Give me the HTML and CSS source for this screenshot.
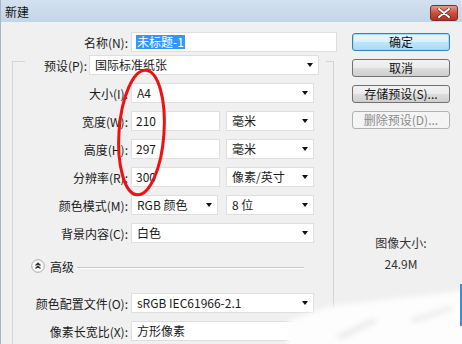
FILE: index.html
```html
<!DOCTYPE html>
<html lang="zh-CN">
<head>
<meta charset="UTF-8" />
<title>新建</title>
<link rel="stylesheet" href="styles.css">
</head>
<body>

<div class="window">
  <div class="titlebar">
    <span class="title">新建</span>
    <span class="close">
      <svg width="14" height="10" viewBox="0 0 14 10">
        <path d="M2 1 L12 9 M12 1 L2 9" stroke="#5a1a1a" stroke-width="3.2" stroke-linecap="round"/>
        <path d="M2 1 L12 9 M12 1 L2 9" stroke="#fff" stroke-width="2" stroke-linecap="round"/>
      </svg>
    </span>
  </div>

  <div class="body">
    <div class="form">
      <div class="row name-row">
        <label>名称(N):</label>
        <div class="field w-name"><span class="picked">未标题-1</span></div>
      </div>

      <div class="group">
        <div class="row preset">
          <label>预设(P):</label>
          <div class="field select w-preset"><span>国际标准纸张</span><i class="arrow"></i></div>
        </div>
        <div class="row">
          <label>大小(I):</label>
          <div class="field select w-full"><span>A4</span><i class="arrow"></i></div>
        </div>
        <div class="row">
          <label>宽度(W):</label>
          <div class="field w-num">210</div>
          <div class="field select w-unit"><span>毫米</span><i class="arrow"></i></div>
        </div>
        <div class="row">
          <label>高度(H):</label>
          <div class="field w-num">297</div>
          <div class="field select w-unit"><span>毫米</span><i class="arrow"></i></div>
        </div>
        <div class="row">
          <label>分辨率(R):</label>
          <div class="field w-num">300</div>
          <div class="field select w-unit"><span>像素/英寸</span><i class="arrow"></i></div>
        </div>
        <div class="row">
          <label>颜色模式(M):</label>
          <div class="field select w-mode"><span>RGB 颜色</span><i class="arrow"></i></div>
          <div class="field select w-unit gap8"><span>8 位</span><i class="arrow"></i></div>
        </div>
        <div class="row">
          <label>背景内容(C):</label>
          <div class="field select w-full"><span>白色</span><i class="arrow"></i></div>
        </div>

        <div class="advanced">
          <span class="toggle">
            <svg width="14" height="14" viewBox="0 0 14 14">
              <circle cx="7" cy="7" r="6.3" fill="#fafafa" stroke="#a9a9a9"/>
              <path d="M4.5 6.5 L7 4.2 L9.5 6.5 M4.5 9.5 L7 7.2 L9.5 9.5" fill="none" stroke="#333" stroke-width="1.3"/>
            </svg>
          </span>
          <span>高级</span>
          <span class="rule"></span>
        </div>

        <div class="row profile">
          <label>颜色配置文件(O):</label>
          <div class="field select w-full"><span>sRGB IEC61966-2.1</span><i class="arrow"></i></div>
        </div>
        <div class="row">
          <label>像素长宽比(X):</label>
          <div class="field select w-full"><span>方形像素</span><i class="arrow"></i></div>
        </div>
      </div>
    </div>

    <div class="side">
      <button class="default">确定</button>
      <button>取消</button>
      <button>存储预设(S)...</button>
      <button disabled>删除预设(D)...</button>
      <div class="image-size">
        <div>图像大小:</div>
        <div class="size-value">24.9M</div>
      </div>
    </div>
  </div>

  <!-- 红圈标注和去水印痕迹 -->
  <svg class="marks" width="462" height="344" viewBox="0 0 462 344">
    <defs>
      <filter id="soft" x="-20%" y="-20%" width="140%" height="140%">
        <feGaussianBlur stdDeviation="2.5" />
      </filter>
    </defs>
    <path d="M287 350 L288 321 L330 306 L400 298 L470 290 L470 350 Z" fill="#fdfdfd" filter="url(#soft)" />
    <path d="M335 336 L372 318 L378 322 L342 340 Z" fill="#e2e2e2" opacity="0.6" filter="url(#soft)" />
    <path d="M410 318 L450 305 L455 310 L415 324 Z" fill="#e4e4e4" opacity="0.5" filter="url(#soft)" />
    <line x1="461" y1="284" x2="461" y2="326" stroke="#3b8fd6" stroke-width="2" />
    <ellipse cx="141.5" cy="132.5" rx="22.5" ry="62.5" transform="rotate(4 141.5 132.5)" fill="none" stroke="#ee1111" stroke-width="3" />
  </svg>
</div>

</body>
</html>
```

FILE: styles.css
```css
body {
  margin: 0;
}
.window {
  position: relative;
  width: 462px;
  height: 344px;
  overflow: hidden;
  box-sizing: border-box;
  border-left: 1px solid #a7b6c6;
  background-color: #f0f0f0;
  font-family: "Noto Sans CJK SC", sans-serif;
  font-size: 12px;
  color: #1b1b1b;
}
.titlebar {
  height: 22px;
  display: flex;
  justify-content: space-between;
  padding: 0 4px;
  background: linear-gradient(#d3e1f0, #c4d5e8);
}
.title {
  line-height: 24px;
  color: #111;
}
.close {
  width: 28px;
  height: 16px;
  margin-top: 5px;
  box-sizing: border-box;
  border: 1px solid #7a2d2d;
  border-radius: 3px;
  background: linear-gradient(#e39c8e, #c9503c 50%, #b8301f);
  display: flex;
  align-items: center;
  justify-content: center;
}

.body {
  display: flex;
}
.form {
  width: 339px;
}
.row {
  display: flex;
  align-items: center;
  height: 20px;
}
.row label {
  width: 115px;
  margin-right: 3px;
  text-align: right;
  white-space: nowrap;
}
.name-row {
  margin-top: 10px;
}
.name-row label {
  width: 127px;
}

.field {
  height: 20px;
  box-sizing: border-box;
  border: 1px solid #dedede;
  background-color: #fff;
  line-height: 18px;
  padding-left: 4px;
  white-space: nowrap;
}
.select {
  display: flex;
  justify-content: space-between;
  align-items: center;
  padding: 0 5px 0 5px;
}
.arrow {
  width: 0;
  height: 0;
  border-left: 3px solid transparent;
  border-right: 3px solid transparent;
  border-top: 4px solid #111;
}
.picked {
  background-color: #3297fd;
  color: #fff;
  padding: 0 1px;
  line-height: 14px;
  display: inline-block;
}

.w-name { width: 206px; }
.w-preset { width: 230px; }
.w-full { width: 183px; }
.w-num { width: 89px; }
.w-unit { width: 88px; margin-left: 6px; }
.w-mode { width: 87px; }
.gap8 { margin-left: 8px; }

.group {
  margin: 9px 0 0 11px;
  width: 322px;
  height: 300px;
  box-sizing: border-box;
  border: 1px solid #d4d4d4;
  border-bottom: none;
}
.group .row {
  margin-top: 8px;
}
.group .preset {
  margin: -7px 7px 0 12px;
  background-color: #f0f0f0;
}
.preset label {
  width: 62px;
  margin-right: 2px;
}

.advanced {
  display: flex;
  align-items: center;
  height: 16px;
  margin-top: 15px;
  padding-left: 18px;
}
.toggle {
  display: flex;
  margin-right: 5px;
}
.rule {
  width: 227px;
  height: 1px;
  margin: 3px 0 0 3px;
  background-color: #c8c8c8;
  border-bottom: 1px solid #fff;
}
.group .profile {
  margin-top: 19px;
}

.side {
  width: 98px;
  padding: 11px 0 0 12px;
  display: flex;
  flex-direction: column;
  gap: 8px;
}
button {
  height: 18px;
  padding: 0;
  border: 1px solid #707070;
  border-radius: 3px;
  background: linear-gradient(#f2f2f2, #ebebeb 50%, #dddddd 51%, #cfcfcf);
  font-family: "Noto Sans CJK SC", sans-serif;
  font-size: 12px;
  line-height: 16px;
  color: #111;
}
button.default {
  border-color: #3c7fb1;
  box-shadow: inset 0 0 0 1px #a6dbf6;
  background: linear-gradient(#eaf6fd, #d9f0fc 50%, #bee6fd 51%, #a7d9f5);
}
button:disabled {
  border-color: #adb2b5;
  background: #f4f4f4;
  color: #8b8b8b;
}
.image-size {
  margin-top: 98px;
  text-align: center;
  line-height: 16px;
  color: #333;
}
.size-value {
  margin-top: 5px;
}

.marks {
  position: absolute;
  left: -1px;
  top: 0;
  pointer-events: none;
}
```
